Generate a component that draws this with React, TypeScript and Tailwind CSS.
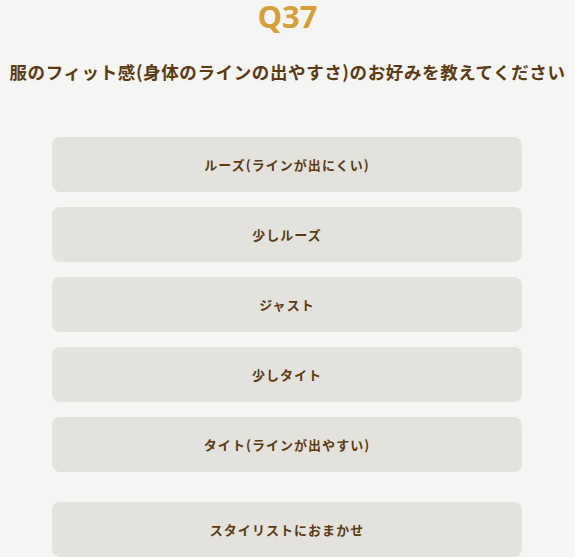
import React from "react";

const options = [
  "ルーズ(ラインが出にくい)",
  "少しルーズ",
  "ジャスト",
  "少しタイト",
  "タイト(ラインが出やすい)",
];

export default function App() {
  const font = { fontFamily: '"Noto Sans CJK JP", "Noto Sans", sans-serif' };
  return (
    <div className="min-h-[557px] w-[575px] bg-[#f5f5f3] flex flex-col items-center" style={font}>
      <div className="text-[31px] leading-[36px] font-bold text-[#d4a03c] -mt-[2px]" style={{ fontFamily: '"Open Sans", "Noto Sans", sans-serif' }}>Q37</div>
      <h1 className="mt-[26px] text-[17.5px] leading-[24px] font-bold text-[#5a3b14] tracking-[0.035em]">
        服のフィット感(身体のラインの出やすさ)のお好みを教えてください
      </h1>
      <div className="mt-[53px] ml-[52px] self-start w-[470px] flex flex-col gap-[15px]">
        {options.map((o) => (
          <button key={o} className="h-[55px] w-full rounded-[8px] bg-[#e4e2dd] text-[13px] font-bold text-[#5a3b14] tracking-[0.08em]">
            {o}
          </button>
        ))}
        <button className="mt-[15px] h-[55px] w-full rounded-[8px] bg-[#e4e2dd] text-[13px] font-bold text-[#5a3b14] tracking-[0.08em]">
          スタイリストにおまかせ
        </button>
      </div>
    </div>
  );
}
